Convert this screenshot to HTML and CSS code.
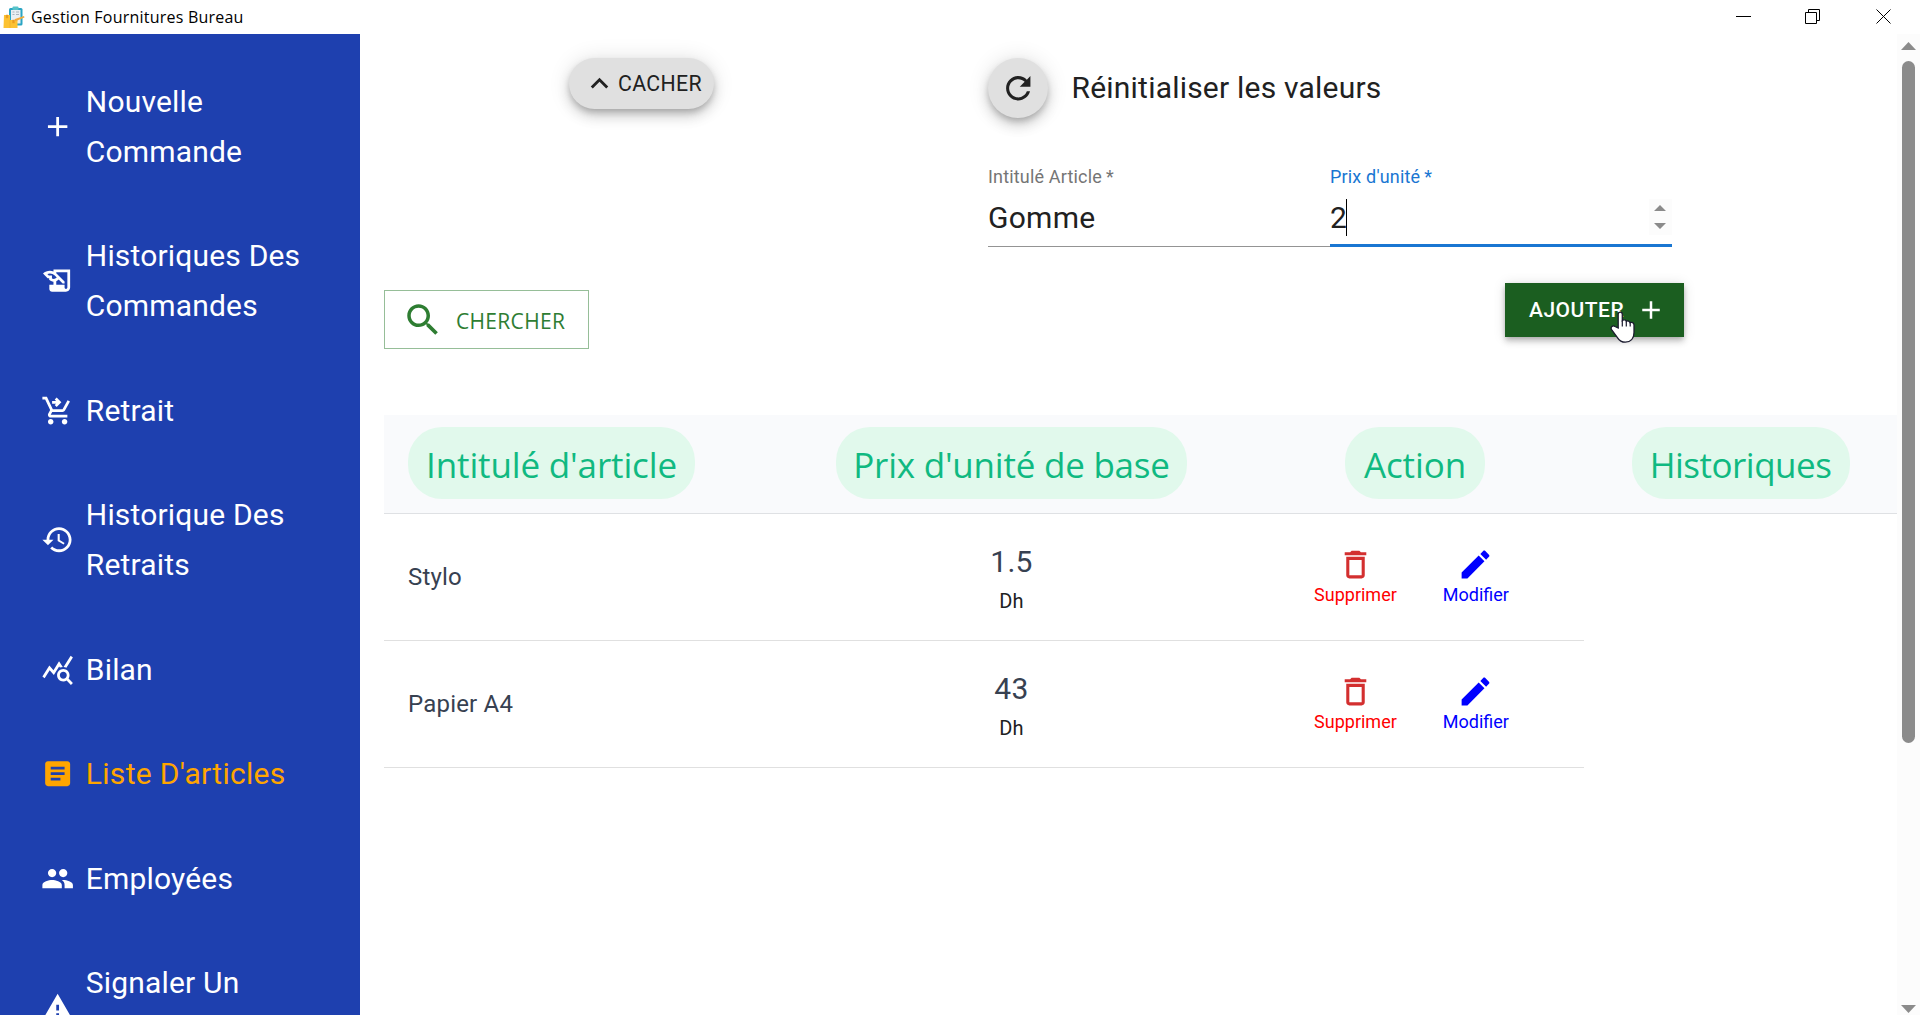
FILE: index.html
```html
<!DOCTYPE html>
<html lang="fr">
<head>
<meta charset="utf-8">
<title>Gestion Fournitures Bureau</title>
<link rel="stylesheet" href="styles.css">
</head>
<body>
<header class="titlebar">
  <svg class="app-icon" viewBox="0 0 22 23">
    <rect x="6" y="2" width="13.500" height="17.500" rx="1.500" fill="#2aa5c4"/>
    <rect x="8" y="4" width="9.500" height="13.500" fill="#e9eef2"/>
    <rect x="9.500" y="0.500" width="6" height="3.500" rx="1" fill="#58c3c9"/>
    <path d="M9.500 6h2M13 6h3M9.500 8.500h2M13 8.500h3" stroke="#a9b3bd" stroke-width="1"/>
    <path d="M1 9h6v5h7.500v8H.5z" fill="#fcc232"/>
    <path d="M3 9h2v3H3zM7 14v8M9.500 14h2v3h-2z" fill="#e99a1c" stroke="#eba52a" stroke-width=".5"/>
    <path d="M10.500 15.500l1.500-2.500 9-3 .5 1.500-8.500 3.500z" fill="#f2a93b"/>
  </svg>
  <span class="app-title">Gestion Fournitures Bureau</span>
  <div class="window-controls">
    <svg viewBox="0 0 16 16"><path d="M0 7.500h15" /></svg>
    <svg viewBox="0 0 16 16"><path d="M.5 3.500h11v11H.5zM3.500 3.500v-3h11v11h-3" /></svg>
    <svg viewBox="0 0 16 16"><path d="M.5.5l14 14M14.500.5l-14 14" /></svg>
  </div>
</header>
<div class="shell">
  <nav class="sidebar">
    <a class="nav-item"><svg class="nav-icon" viewBox="0 0 24 24"><path d="M19 13h-6v6h-2v-6H5v-2h6V5h2v6h6v2z"/></svg><span>Nouvelle<br>Commande</span></a>
    <a class="nav-item"><svg class="nav-icon" viewBox="0 0 24 24"><path d="M9 4v1.380c-.83-.33-1.720-.5-2.610-.5-1.790 0-3.580.68-4.950 2.050l3.330 3.330h1.110v1.110c.86.86 1.980 1.310 3.110 1.360V15H6v3c0 1.100.9 2 2 2h10c1.660 0 3-1.340 3-3V4H9zm-1.110 6.410V8.260H5.610L4.570 7.220a5.070 5.070 0 0 1 1.820-.34c1.340 0 2.590.52 3.540 1.460l1.410 1.410-.2.200c-.51.51-1.190.8-1.920.8-.47 0-.93-.12-1.330-.34zM19 17c0 .55-.45 1-1 1s-1-.45-1-1v-2h-6v-2.590c.57-.23 1.100-.57 1.560-1.030l.2-.2L15.590 14H17v-1.410l-6-5.970V6h8v11z"/></svg><span>Historiques Des<br>Commandes</span></a>
    <a class="nav-item"><svg class="nav-icon" viewBox="0 0 24 24"><path d="M11.290 9.410 14.700 6l-3.410-3.410L9.880 4l1 1H8v2h2.880l-1 1zM7 18c-1.100 0-1.990.9-1.990 2S5.900 22 7 22s2-.9 2-2-.9-2-2-2zm10 0c-1.100 0-1.990.9-1.990 2s.89 2 1.990 2 2-.9 2-2-.9-2-2-2zm-1.450-5c.75 0 1.410-.41 1.750-1.030l3.580-6.490-1.740-.97L15.550 11H8.530L4.270 2H1v2h2l3.600 7.590-1.350 2.440C4.520 15.370 5.480 17 7 17h12v-2H7l1.100-2h7.450z"/></svg><span>Retrait</span></a>
    <a class="nav-item"><svg class="nav-icon" viewBox="0 0 24 24"><path d="M13 3c-4.970 0-9 4.030-9 9H1l3.890 3.890.07.14L9 12H6c0-3.870 3.130-7 7-7s7 3.130 7 7-3.130 7-7 7c-1.930 0-3.680-.79-4.940-2.060l-1.420 1.420C8.270 19.990 10.510 21 13 21c4.970 0 9-4.030 9-9s-4.030-9-9-9zm-1 5v5l4.280 2.540.72-1.210-3.500-2.080V8H12z"/></svg><span>Historique Des<br>Retraits</span></a>
    <a class="nav-item"><svg class="nav-icon" viewBox="0 0 24 24"><path d="M19.880 18.470c.44-.7.700-1.510.700-2.390 0-2.490-2.010-4.500-4.500-4.500s-4.500 2.010-4.500 4.500 2.010 4.500 4.490 4.500c.88 0 1.700-.26 2.390-.7L21.580 23 23 21.580l-3.120-3.110zm-3.800.11c-1.380 0-2.500-1.120-2.500-2.500s1.120-2.500 2.500-2.500 2.500 1.120 2.500 2.500-1.120 2.500-2.500 2.500zm-.36-8.500c-.74.02-1.450.18-2.100.45l-.55-.83-3.800 6.180-3.010-3.520-3.630 5.810L1 17l5-8 3 3.500L13 6l2.720 4.080zm2.590.5c-.64-.28-1.330-.45-2.050-.49L21.380 2 23 3.180l-4.690 7.400z"/></svg><span>Bilan</span></a>
    <a class="nav-item active"><svg class="nav-icon" viewBox="0 0 24 24"><path d="M19 3H5c-1.100 0-2 .9-2 2v14c0 1.100.9 2 2 2h14c1.100 0 2-.9 2-2V5c0-1.100-.9-2-2-2zm-5 14H7v-2h7v2zm3-4H7v-2h10v2zm0-4H7V7h10v2z"/></svg><span>Liste D'articles</span></a>
    <a class="nav-item"><svg class="nav-icon" viewBox="0 0 24 24"><path d="M16 11c1.660 0 2.990-1.340 2.990-3S17.660 5 16 5c-1.660 0-3 1.340-3 3s1.340 3 3 3zm-8 0c1.660 0 2.990-1.340 2.990-3S9.660 5 8 5C6.340 5 5 6.340 5 8s1.340 3 3 3zm0 2c-2.330 0-7 1.170-7 3.500V19h14v-2.500c0-2.330-4.670-3.500-7-3.500zm8 0c-.29 0-.62.02-.97.05 1.160.84 1.970 1.970 1.970 3.450V19h6v-2.500c0-2.330-4.670-3.500-7-3.500z"/></svg><span>Employées</span></a>
    <a class="nav-item"><svg class="nav-icon" viewBox="0 0 24 24"><path d="M1 21h22L12 2 1 21zm12-3h-2v-2h2v2zm0-4h-2v-4h2v4z"/></svg><span>Signaler Un<br>&nbsp;</span></a>
  </nav>

  <main class="content">
    <section class="toolbar">
      <div class="tools">
        <button class="btn-hide"><svg viewBox="0 0 24 24"><path d="M12 8l-6 6 1.410 1.410L12 10.830l4.590 4.580L18 14z"/></svg><span>CACHER</span></button>
        <button class="btn-search"><svg viewBox="0 0 24 24"><path d="M15.500 14h-.79l-.28-.27C15.410 12.590 16 11.110 16 9.500 16 5.910 13.090 3 9.500 3S3 5.910 3 9.500 5.910 16 9.500 16c1.610 0 3.090-.59 4.230-1.570l.27.28v.79l5 4.990L20.490 19l-4.990-5zm-6 0C7.010 14 5 11.990 5 9.500S7.010 5 9.500 5 14 7.010 14 9.500 11.990 14 9.500 14z"/></svg><span>CHERCHER</span></button>
      </div>
      <form class="article-form">
        <div class="reset">
          <button type="button" class="btn-reset"><svg viewBox="0 0 24 24"><path d="M17.650 6.350C16.200 4.900 14.210 4 12 4c-4.420 0-7.990 3.580-7.990 8s3.570 8 7.990 8c3.730 0 6.840-2.550 7.730-6h-2.080c-.82 2.330-3.040 4-5.650 4-3.310 0-6-2.690-6-6s2.690-6 6-6c1.660 0 3.140.69 4.220 1.780L13 11h7V4l-2.350 2.350z"/></svg></button>
          <span>Réinitialiser les valeurs</span>
        </div>
        <div class="fields">
          <div class="field"><label>Intitulé Article<span class="star">*</span></label><div class="value">Gomme</div></div>
          <div class="field focused"><label>Prix d'unité<span class="star">*</span></label><div class="value">2<i class="caret"></i>
            <svg class="spinner" viewBox="0 0 23 36"><path d="M5 12l6-6 6 6zM5 24l6 6 6-6z"/></svg></div></div>
        </div>
        <button type="button" class="btn-add">AJOUTER<svg viewBox="0 0 24 24"><path d="M19 13h-6v6h-2v-6H5v-2h6V5h2v6h6v2z"/></svg>
          <svg class="pointer" viewBox="0 0 26 33"><path d="M8.200 17V3.200C8.200.3 12.300.3 12.300 3.200V9.500c1.300-1.200 3.600-.8 4 .9 1.300-.9 3.400-.4 3.700 1.200 1.700-.8 4 .1 4 2.300v7.600c0 6-3.500 9.700-8.700 9.700-3.600 0-6-1.600-7.700-4.400L1.600 18.700c-1.600-2.600 1.400-4.900 3.500-3.200z" fill="#fff" stroke="#1a1a2e" stroke-width="1.300"/><path d="M12.300 9.500v6M16.300 10.500v5M20.200 11.500v4" stroke="#1a1a2e" stroke-width="1.200"/></svg></button>
      </form>
    </section>

    <section class="table">
      <div class="thead">
        <div class="cell start"><span class="pill pill-title">Intitulé d'article</span></div>
        <div class="cell"><span class="pill pill-price">Prix d'unité de base</span></div>
        <div class="cell"><span class="pill pill-action">Action</span></div>
        <div class="cell"><span class="pill pill-history">Historiques</span></div>
      </div>
      <div class="row">
        <div class="cell start">Stylo</div>
        <div class="cell price"><b>1.5</b><span>Dh</span></div>
        <div class="cell actions">
          <div class="action delete"><svg viewBox="0 0 24 24"><path d="M6 19c0 1.100.9 2 2 2h8c1.100 0 2-.9 2-2V7H6v12zM8 9h8v10H8V9zm7.500-5l-1-1h-5l-1 1H5v2h14V4h-3.500z"/></svg>Supprimer</div>
          <div class="action edit"><svg viewBox="0 0 24 24"><path d="M3 17.250V21h3.750L17.810 9.940l-3.750-3.750L3 17.250zM20.710 7.040c.39-.39.39-1.020 0-1.410l-2.340-2.340c-.39-.39-1.020-.39-1.410 0l-1.830 1.830 3.750 3.750 1.830-1.830z"/></svg>Modifier</div>
        </div>
      </div>
      <div class="row">
        <div class="cell start">Papier A4</div>
        <div class="cell price"><b>43</b><span>Dh</span></div>
        <div class="cell actions">
          <div class="action delete"><svg viewBox="0 0 24 24"><path d="M6 19c0 1.100.9 2 2 2h8c1.100 0 2-.9 2-2V7H6v12zM8 9h8v10H8V9zm7.500-5l-1-1h-5l-1 1H5v2h14V4h-3.500z"/></svg>Supprimer</div>
          <div class="action edit"><svg viewBox="0 0 24 24"><path d="M3 17.250V21h3.750L17.810 9.940l-3.750-3.750L3 17.250zM20.710 7.040c.39-.39.39-1.020 0-1.410l-2.340-2.340c-.39-.39-1.020-.39-1.410 0l-1.830 1.830 3.750 3.750 1.830-1.830z"/></svg>Modifier</div>
        </div>
      </div>
    </section>
  </main>

  <div class="scrollbar">
    <svg viewBox="0 0 15 8"><path d="M0 8L7.500 0 15 8z"/></svg>
    <div class="thumb"></div>
    <svg class="down" viewBox="0 0 15 8"><path d="M0 0h15L7.500 8z"/></svg>
  </div>
</div>
</body>
</html>
```
FILE: styles.css
```css
* { box-sizing: border-box; }

body {
  margin: 0;
  height: 1015px;
  display: flex;
  flex-direction: column;
  overflow: hidden;
  background: #fff;
  font-family: Roboto, "Liberation Sans", sans-serif;
  color: #212121;
}

button {
  border: 0;
  padding: 0;
  font: inherit;
  color: inherit;
}

svg { display: block; flex: none; fill: currentColor; }

/* Window title bar */
.titlebar {
  flex: none;
  height: 34px;
  display: flex;
  align-items: center;
  padding: 0 28px 0 3px;
}
.app-icon { width: 22px; height: 23px; }
.app-title {
  margin-left: 6px;
  font: 16px/34px "Open Sans", "Noto Sans", sans-serif;
  letter-spacing: 0.220px;
  color: #000;
}
.window-controls { margin-left: auto; display: flex; gap: 53px; }
.window-controls svg {
  width: 16px;
  height: 16px;
  fill: none;
  stroke: #000;
}
.window-controls svg:last-child { margin-left: 2px; }

.shell { flex: 1; min-height: 0; display: flex; }

/* Sidebar */
.sidebar {
  flex: none;
  width: 360px;
  padding-top: 15.300px;
  overflow: hidden;
  background: #1e40af;
  color: #fff;
}
.nav-item {
  display: flex;
  align-items: center;
  gap: 11.500px;
  padding: 27.250px 0 27.250px 41px;
  font-size: 30px;
  line-height: 50px;
  letter-spacing: 0.18px;
}
.nav-icon { width: 33.300px; height: 33.300px; }
.nav-item.active { color: orange; letter-spacing: 0.3px; }

/* Main area */
.content { flex: 1; min-width: 0; padding: 24px 0 0 24px; }

.toolbar { display: grid; grid-template-columns: 604px 696px; height: 357px; }
.tools {
  height: 291px;
  display: flex;
  flex-direction: column;
  justify-content: space-between;
  align-items: flex-start;
}
.btn-hide, .btn-reset {
  background: #e0e0e0;
  box-shadow: 0 4px 6px -1px rgba(0, 0, 0, .2), 0 7.500px 12.500px rgba(0, 0, 0, .14), 0 1px 22px rgba(0, 0, 0, .12);
}
.btn-hide {
  display: flex;
  align-items: center;
  gap: 1px;
  width: 145px;
  height: 51px;
  margin-left: 185px;
  padding: 0 0 1px 13px;
  border-radius: 26px;
  font-size: 21.300px;
  letter-spacing: 0.350px;
}
.btn-hide svg { width: 35px; height: 35px; margin-top: 1px; }
.btn-search {
  display: flex;
  align-items: center;
  width: 205px;
  height: 59px;
  padding: 0 0 0 17px;
  background: transparent;
  border: 1px solid rgba(46, 125, 50, .5);
  color: #2e7d32;
  font: 500 21px "Open Sans", "Noto Sans", sans-serif;
  letter-spacing: 0.320px;
}
.btn-search svg { width: 42px; height: 42px; margin-right: 12px; }
.btn-search span { padding-top: 2px; }

.article-form { display: flex; flex-direction: column; }
.reset {
  display: flex;
  align-items: center;
  gap: 23.500px;
  font-size: 30px;
  letter-spacing: 0.210px;
}
.reset span { margin-top: -2px; }
.btn-reset {
  width: 60px;
  height: 60px;
  border-radius: 50%;
  display: grid;
  place-items: center;
}
.btn-reset svg { width: 36.500px; height: 36.500px; }
.fields { display: flex; width: 684px; margin-top: 46px; }
.field { width: 342px; height: 83px; border-bottom: 1px solid #949494; }
.field label {
  display: block;
  font-size: 18px;
  line-height: 26px;
  letter-spacing: 0.17px;
  color: #757575;
}
.star { margin-left: 4px; }
.field .value {
  display: flex;
  align-items: center;
  height: 37px;
  margin-top: 9px;
  font-size: 30px;
  letter-spacing: 0.28px;
}
.field.focused { border-bottom: 3px solid #1976d2; }
.focused label { color: #1976d2; }
.caret { width: 1px; height: 37px; margin-left: -1.500px; background: #000; }
.spinner { width: 23px; height: 36px; margin: -1px 0 0 auto; background: #fcfcfc; fill: #8b8b8b; }
.btn-add {
  position: relative;
  align-self: flex-end;
  display: flex;
  align-items: center;
  justify-content: space-between;
  width: 179px;
  height: 54px;
  margin-top: 36px;
  padding: 0 18px 0 24px;
  background: #1b5e20;
  color: #fff;
  font-size: 21px;
  font-weight: 500;
  letter-spacing: 0.500px;
  box-shadow: 0 2px 5px -1px rgba(0, 0, 0, .2), 0 5px 6px rgba(0, 0, 0, .14), 0 1px 12px rgba(0, 0, 0, .12);
}
.btn-add svg { width: 30px; height: 30px; }
.btn-add .pointer { position: absolute; left: 105px; top: 28px; width: 26px; height: 33px; }

/* Articles table */
.thead, .row { display: grid; grid-template-columns: 393px 469px 338px 313px; }
.cell { display: flex; align-items: center; justify-content: center; }
.cell.start { justify-content: flex-start; padding-left: 24px; }
.thead {
  height: 99px;
  background: #f9fafc;
  border-bottom: 1px solid #dfe1e4;
}
.pill {
  height: 72px;
  margin-bottom: 3px;
  border-radius: 34px;
  background: #e1f9ec;
  color: #10b981;
  font: 35px/75px "Open Sans", "Noto Sans", sans-serif;
  text-align: center;
  white-space: nowrap;
}
.pill-title { width: 287px; letter-spacing: -0.150px; }
.pill-price { width: 351px; letter-spacing: -0.230px; }
.pill-action { width: 140px; letter-spacing: -0.100px; }
.pill-history { width: 218px; letter-spacing: -0.500px; }
.row { height: 127px; color: #374151; }
.row .cell { border-bottom: 1px solid #e0e0e0; font-size: 24px; letter-spacing: 0.200px; }
.row .price { flex-direction: column; padding-top: 2px; letter-spacing: 0.28px; }
.price b { font-size: 30px; line-height: 45px; font-weight: 400; }
.price span { font-size: 20px; line-height: 34px; color: #212121; }
.row .actions { gap: 46px; padding: 0 7px 2px 0; font-size: 18px; line-height: 23px; letter-spacing: 0; }
.action { display: flex; flex-direction: column; align-items: center; }
.action svg { width: 37px; height: 37px; }
.delete { color: red; }
.delete svg { color: #d32f2f; }
.edit { color: blue; }

/* Page scrollbar */
.scrollbar {
  flex: none;
  width: 23px;
  display: flex;
  flex-direction: column;
  align-items: center;
  padding: 8px 0 2px;
  background: #fcfcfc;
  color: #8b8b8b;
}
.scrollbar svg { width: 15px; height: 8px; }
.thumb { width: 13px; height: 682px; margin-top: 11px; border-radius: 6.500px; background: #8b8b8b; }
.down { margin-top: auto; }
```
